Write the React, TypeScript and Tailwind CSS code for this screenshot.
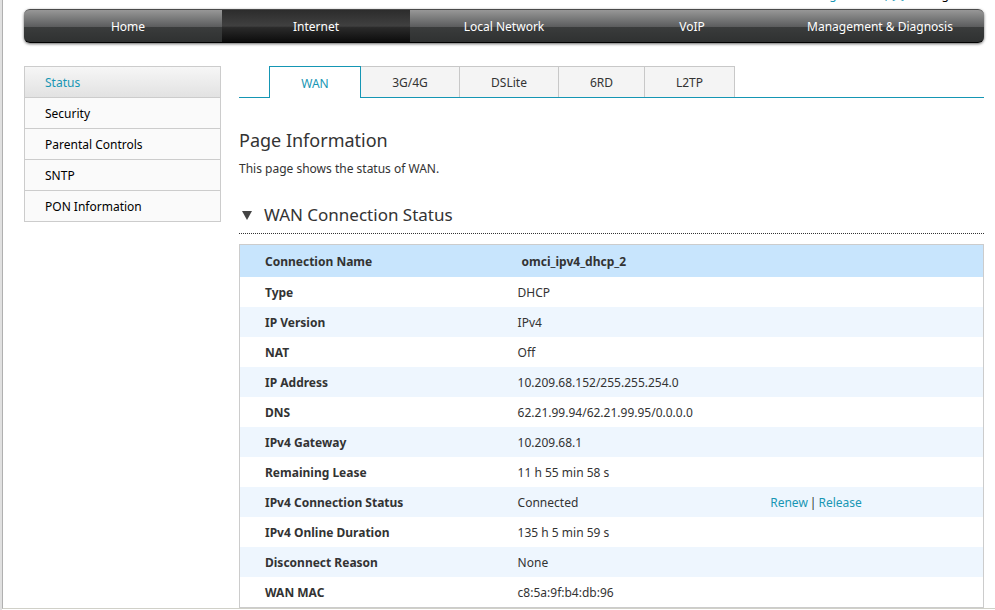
import React from "react";
import clsx from "clsx";

const navItems = ["Home", "Internet", "Local Network", "VoIP", "Management & Diagnosis"];
const menuItems = ["Status", "Security", "Parental Controls", "SNTP", "PON Information"];

const tabs = [
  { label: "WAN", className: "w-[92px]" },
  { label: "3G/4G", className: "w-[99px]" },
  { label: "DSLite", className: "w-[99px]" },
  { label: "6RD", className: "w-[86px]" },
  { label: "L2TP", className: "w-[90px]" },
];

const rows = [
  { name: "Type", value: "DHCP" },
  { name: "IP Version", value: "IPv4" },
  { name: "NAT", value: "Off" },
  { name: "IP Address", value: "10.209.68.152/255.255.254.0" },
  { name: "DNS", value: "62.21.99.94/62.21.99.95/0.0.0.0" },
  { name: "IPv4 Gateway", value: "10.209.68.1" },
  { name: "Remaining Lease", value: "11 h 55 min 58 s" },
  { name: "IPv4 Connection Status", value: "Connected", renewable: true },
  { name: "IPv4 Online Duration", value: "135 h 5 min 59 s" },
  { name: "Disconnect Reason", value: "None" },
  { name: "WAN MAC", value: "c8:5a:9f:b4:db:96" },
];

// only the bottom edge of this line stays in view above the nav bar
function TopLinks() {
  return (
    <div className="flex h-[9px] items-end justify-end overflow-hidden">
      <div className="mb-1 flex h-5 gap-6 pr-4">
        <a href="#" className="text-[#1896b4]">English</a>
        <a href="#" className="font-['Noto_Sans_CJK_SC',sans-serif] text-[#1896b4]">中文</a>
        <a href="#" className="text-black">Logout</a>
      </div>
    </div>
  );
}

function NavBar() {
  return (
    <nav className="flex h-[34px] overflow-hidden rounded-md border-t border-b border-t-[#4a4a4a] border-b-black bg-[linear-gradient(#979797,#5c5d5e_52%,#3a3c3c_53%,#2f3131)] px-2.5 shadow-[0_1px_3px_rgba(0,0,0,0.6)]">
      {navItems.map((item) => (
        <a
          key={item}
          href="#"
          className={clsx(
            "flex flex-1 items-center justify-center pt-0.5 whitespace-nowrap text-white",
            item === "Internet" && "bg-[linear-gradient(#2c2c2c,#404040_50%,#2a2a2a_55%,#0c0c0c)]"
          )}
        >
          {item}
        </a>
      ))}
    </nav>
  );
}

function SideMenu() {
  return (
    <aside className="w-[197px] shrink-0">
      <ul className="border border-[#ccc]">
        {menuItems.map((item) => (
          <li key={item} className="border-b border-[#ccc] last:border-b-0">
            <a
              href="#"
              className={clsx(
                "flex h-[30px] items-center px-5 pt-0.5",
                item === "Status"
                  ? "bg-linear-to-b from-[#f6f6f6] to-[#e2e2e2] text-[#1896b4]"
                  : "bg-[#fafafa] text-black"
              )}
            >
              {item}
            </a>
          </li>
        ))}
      </ul>
    </aside>
  );
}

function Tabs() {
  return (
    <div className="flex h-8 border-b border-[#1596b4] pl-[30px]">
      {tabs.map((tab) => (
        <a
          key={tab.label}
          href="#"
          className={clsx(
            "flex items-center justify-center border-t border-r pt-0.5",
            tab.className,
            tab.label === "WAN"
              ? "-mb-px border-l border-[#1596b4] bg-white text-[#1896b4]"
              : "border-[#c8c8c8] bg-[#f4f4f4]"
          )}
        >
          {tab.label}
        </a>
      ))}
    </div>
  );
}

function StatusTable() {
  return (
    <table className="w-full table-fixed border-separate border-spacing-0 border border-[#ccc] text-left">
      <colgroup>
        <col className="w-[34%]" />
        <col className="w-[34%]" />
        <col />
      </colgroup>
      <thead>
        <tr className="h-8 bg-[#c8e5fd]">
          <th className="pt-0.5 pl-[25px] font-bold">Connection Name</th>
          <th className="pt-0.5 pl-[29px] font-bold" colSpan={2}>omci_ipv4_dhcp_2</th>
        </tr>
      </thead>
      <tbody>
        {rows.map((row) => (
          <tr key={row.name} className="h-[30px] even:bg-[#eef6fe]">
            <th className="pt-0.5 pl-[25px] font-bold">{row.name}</th>
            <td className="pt-0.5 pl-[25px]">{row.value}</td>
            <td className="pt-0.5 pl-[25px]">
              {row.renewable && (
                <>
                  <a href="#" className="text-[#1896b4]">Renew</a>
                  <span className="mx-0.5">|</span>
                  <a href="#" className="text-[#1896b4]">Release</a>
                </>
              )}
            </td>
          </tr>
        ))}
      </tbody>
    </table>
  );
}

export default function App() {
  return (
    <div className="min-h-screen border-l-2 border-[#e0e0e0] bg-white font-['Noto_Sans',sans-serif] text-[12px] leading-5 text-[#333]">
      <div className="border-b border-l border-b-[#d0d0c8] border-l-[#b0b0b0] pr-[11px] pl-[21px]">
        <TopLinks />
        <NavBar />
        <div className="mt-[23px] flex gap-[18px]">
          <SideMenu />
          <main className="min-w-0 flex-1">
            <Tabs />
            <h1 className="mt-7 text-[18px] leading-7">Page Information</h1>
            <p className="mt-[5px]">This page shows the status of WAN.</p>
            <h2 className="mt-[23px] mb-[10px] flex h-8 items-center border-b border-dotted border-[#333] pb-1.5 text-[17px]">
              <button type="button" className="flex items-center">
                <svg width="25" height="10" viewBox="0 0 25 10" className="fill-[#444]">
                  <path d="M3 1h10L8 10z" />
                </svg>
                WAN Connection Status
              </button>
            </h2>
            <StatusTable />
          </main>
        </div>
      </div>
    </div>
  );
}
